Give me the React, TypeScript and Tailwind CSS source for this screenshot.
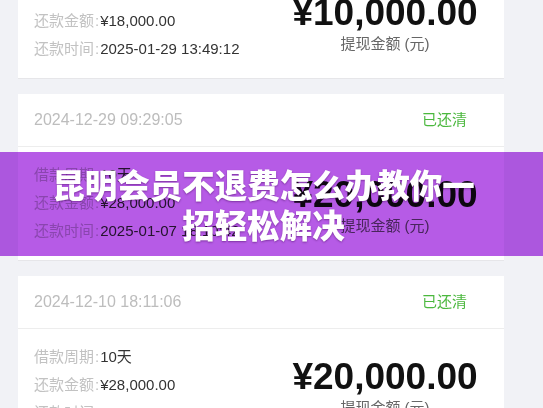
const FONT = { fontFamily: '"Liberation Sans", "Noto Sans CJK SC", sans-serif' };

type Record = {
  date: string;
  period: string;
  repay: string;
  time: string;
  amount: string;
};

const RECORDS: Record[] = [
  { date: '2025-01-19 13:49:12', period: '10天', repay: '¥18,000.00', time: '2025-01-29 13:49:12', amount: '¥10,000.00' },
  { date: '2024-12-29 09:29:05', period: '10天', repay: '¥28,000.00', time: '2025-01-07 18:10:42', amount: '¥20,000.00' },
  { date: '2024-12-10 18:11:06', period: '10天', repay: '¥28,000.00', time: '2024-12-20 18:11:06', amount: '¥20,000.00' },
];

const Row = ({ label, value }: { label: string; value: string }) => (
  <div className="flex h-[28px] items-center text-[15px]">
    <span className="text-[#c2c2c2]">{label}</span>
    <span className="text-[#c2c2c2] mx-[1px]">:</span>
    <span className="text-[#333]">{value}</span>
  </div>
);

const RecordCard = ({ item }: { item: Record }) => (
  <div className="bg-white w-[486px] shadow-[0_1px_0_#e6e6e9]">
    {/* Header */}
    <div className="flex h-[53px] items-center justify-between pl-4 pr-[37px] border-b border-[#ededed]">
      <span className="text-[16px] text-[#bdbdbd]">{item.date}</span>
      <span className="text-[15px] text-[#4bb83e]">已还清</span>
    </div>

    {/* Body */}
    <div className="flex h-[113px]">
      <div className="flex-1 pl-4 py-[14px]">
        <Row label="借款周期" value={item.period} />
        <Row label="还款金额" value={item.repay} />
        <Row label="还款时间" value={item.time} />
      </div>
      <div className="w-[238px] flex flex-col items-center justify-center pt-[6px]">
        <div className="text-[37px] leading-[36px] font-bold text-[#111]">{item.amount}</div>
        <div className="text-[15px] leading-[22px] mt-[2px] text-[#666]">提现金额 (元)</div>
      </div>
    </div>
  </div>
);

export default function App() {
  return (
    <div className="relative w-[543px] h-[408px] overflow-hidden bg-[#f1f2f6]" style={FONT}>
      <div className="flex flex-col gap-4 pl-[18px] -mt-[88px]">
        {RECORDS.map((item, index) => (
          <RecordCard key={index} item={item} />
        ))}
      </div>

      {/* Title banner */}
      <div className="absolute left-0 right-0 top-[152px] h-[104px] bg-[#b65be6] mix-blend-multiply" />
      <div className="absolute left-0 right-0 top-[152px] h-[104px] flex items-center justify-center pr-[16px]">
        <h1
          className="w-[432px] text-center text-[32.5px] leading-[40px] font-black text-white [text-shadow:0_1px_2px_rgba(60,0,80,0.45)]"
          style={{ fontFamily: '"Noto Sans CJK SC", sans-serif' }}
        >
          昆明会员不退费怎么办教你一招轻松解决
        </h1>
      </div>
    </div>
  );
}
